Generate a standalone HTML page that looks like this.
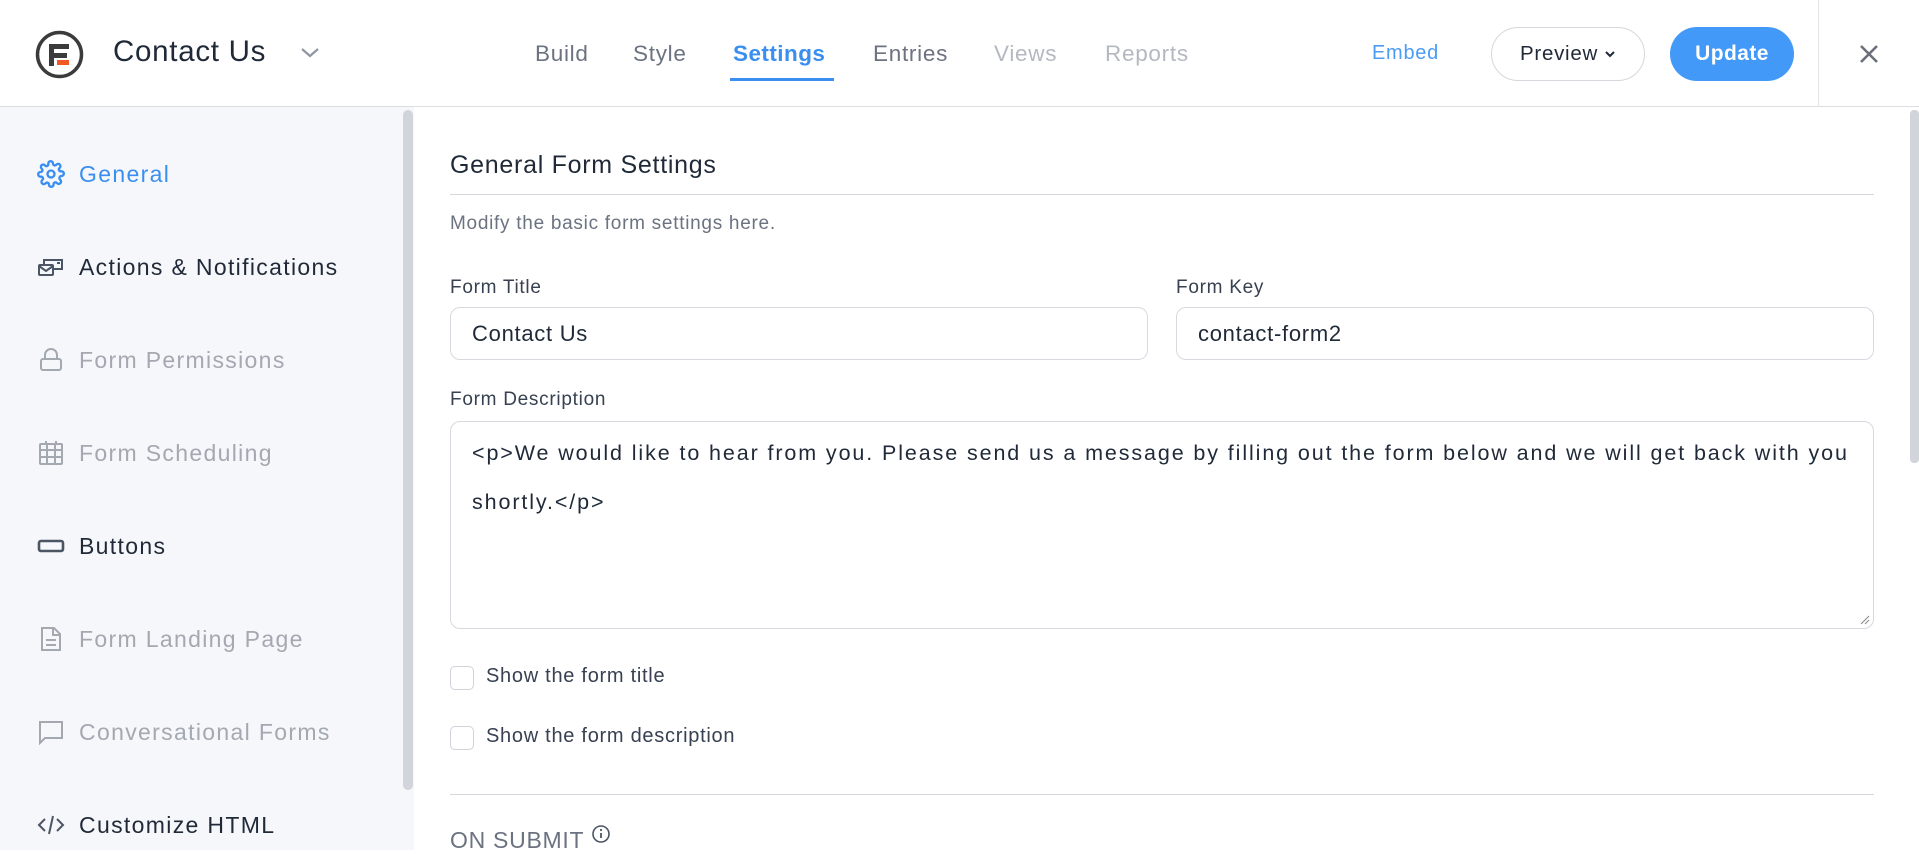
<!DOCTYPE html>
<html><head><meta charset="utf-8">
<style>
*{box-sizing:border-box;margin:0;padding:0}
body{width:1919px;height:850px;overflow:hidden;background:#fff;font-family:"Liberation Sans",sans-serif;color:#1f2937;position:relative;letter-spacing:0.045em}
.a{position:absolute;white-space:nowrap}
.hdr{position:absolute;left:0;top:0;width:1919px;height:107px;background:#fff;border-bottom:1px solid #dcdde1}
.nav{font-size:22.5px;color:#6b7280;top:41px}
.side{position:absolute;left:0;top:107px;width:414px;height:743px;background:#f6f7fb}
.si{position:absolute;left:37px;font-size:23px;display:flex;align-items:center;gap:14px;letter-spacing:0.058em}
.si svg{width:28px;height:28px}
.lbl{font-size:19px;color:#374151}
.inp{position:absolute;border:1px solid #d7d9de;border-radius:10px;background:#fff;font-size:22px;color:#1f2937;padding-left:21px;display:flex;align-items:center}
.cb{position:absolute;left:450px;width:24px;height:24px;border:1px solid #cfd2d8;border-radius:5px;background:#fff}
</style></head><body>
<div class="hdr"></div>
<svg class="a" style="left:35px;top:30px" width="49" height="49" viewBox="0 0 49 49"><circle cx="24.5" cy="24.5" r="22" fill="none" stroke="#3b3b3b" stroke-width="3.5"/><path d="M14 14h20v5H19v4h13v5H19v8h-5z" fill="#3b3b3b"/><rect x="22" y="30" width="12" height="5" fill="#f05a22"/></svg>
<div class="a" style="left:113px;top:35px;font-size:29.5px;color:#1f2937">Contact Us</div>
<svg class="a" style="left:300px;top:47px" width="20" height="12" viewBox="0 0 20 12"><path d="M2 2l8 7 8-7" fill="none" stroke="#9096a3" stroke-width="2.2"/></svg>
<div class="a nav" style="left:535px">Build</div>
<div class="a nav" style="left:633px">Style</div>
<div class="a nav" style="left:733px;color:#3a8ef0;font-weight:bold;letter-spacing:0.02em">Settings</div>
<div class="a" style="left:730px;top:78px;width:104px;height:3px;background:#3a8ef0"></div>
<div class="a nav" style="left:873px">Entries</div>
<div class="a nav" style="left:994px;color:#b4b8c0">Views</div>
<div class="a nav" style="left:1105px;color:#b4b8c0">Reports</div>
<div class="a" style="left:1372px;top:42px;font-size:20px;color:#4a9cf5">Embed</div>
<div class="a" style="left:1491px;top:27px;width:154px;height:54px;border:1px solid #d5d7dc;border-radius:27px;font-size:20.5px;color:#1f2937;display:flex;align-items:center;justify-content:center;gap:6px">Preview <svg width="12" height="8" viewBox="0 0 12 8"><path d="M2 2l4 4 4-4" fill="none" stroke="#1f2937" stroke-width="2"/></svg></div>
<div class="a" style="left:1670px;top:27px;width:124px;height:54px;border-radius:27px;background:#4299f7;color:#fff;font-size:21px;font-weight:bold;letter-spacing:0.02em;display:flex;align-items:center;justify-content:center">Update</div>
<div class="a" style="left:1818px;top:0;width:1px;height:107px;background:#e3e4e8"></div>
<svg class="a" style="left:1858px;top:43px" width="22" height="22" viewBox="0 0 22 22"><path d="M3 3l16 16M19 3L3 19" stroke="#6b6f7a" stroke-width="2.6"/></svg>

<div class="side"></div>
<div class="a" style="left:403px;top:110px;width:10px;height:680px;border-radius:5px;background:#d1d4db"></div>
<div class="si" style="top:160px;color:#3a8ef0"><svg viewBox="0 0 24 24" fill="none" stroke="#3a8ef0" stroke-width="2"><circle cx="12" cy="12" r="3"/><path d="M19.4 15a1.6 1.6 0 0 0 .3 1.8l.1.1a2 2 0 1 1-2.8 2.8l-.1-.1a1.6 1.6 0 0 0-2.7 1.1V21a2 2 0 1 1-4 0v-.1a1.6 1.6 0 0 0-2.7-1.1l-.1.1a2 2 0 1 1-2.8-2.8l.1-.1a1.6 1.6 0 0 0-1.1-2.7H3a2 2 0 1 1 0-4h.1a1.6 1.6 0 0 0 1.1-2.7l-.1-.1a2 2 0 1 1 2.8-2.8l.1.1a1.6 1.6 0 0 0 2.7-1.1V3a2 2 0 1 1 4 0v.1a1.6 1.6 0 0 0 2.7 1.1l.1-.1a2 2 0 1 1 2.8 2.8l-.1.1a1.6 1.6 0 0 0 1.1 2.7H21a2 2 0 1 1 0 4h-.1a1.6 1.6 0 0 0-1.5 1z"/></svg>General</div>
<div class="si" style="top:253px;color:#1f2937"><svg viewBox="0 0 28 28" fill="none" stroke="#4b5563" stroke-width="2"><rect x="2" y="12" width="14" height="10" rx="1"/><path d="M2 13l7 5 7-5M7 12V7h18v9h-9M20 10h3"/></svg>Actions &amp; Notifications</div>
<div class="si" style="top:346px;color:#a3a8b1"><svg viewBox="0 0 28 28" fill="none" stroke="#a3a8b1" stroke-width="2"><rect x="4" y="13" width="20" height="11" rx="2"/><path d="M8 13V9a6 6 0 0 1 12 0v4"/></svg>Form Permissions</div>
<div class="si" style="top:439px;color:#a3a8b1"><svg viewBox="0 0 28 28" fill="none" stroke="#a3a8b1" stroke-width="2"><rect x="3" y="5" width="22" height="20" rx="1"/><path d="M3 11h22M3 18h22M10 5v20M18 5v20M9 2v4M19 2v4"/></svg>Form Scheduling</div>
<div class="si" style="top:532px;color:#1f2937"><svg viewBox="0 0 28 28" fill="none" stroke="#4b5563" stroke-width="2.6"><rect x="2" y="9" width="24" height="10" rx="2"/></svg>Buttons</div>
<div class="si" style="top:625px;color:#a3a8b1"><svg viewBox="0 0 28 28" fill="none" stroke="#a3a8b1" stroke-width="2"><path d="M5 3h12l6 6v16H5z"/><path d="M16 3v7h7M9 15h10M9 20h10"/></svg>Form Landing Page</div>
<div class="si" style="top:718px;color:#a3a8b1"><svg viewBox="0 0 28 28" fill="none" stroke="#a3a8b1" stroke-width="2"><path d="M3 4h22v16H8l-5 5z"/></svg>Conversational Forms</div>
<div class="si" style="top:811px;color:#1f2937"><svg viewBox="0 0 28 28" fill="none" stroke="#4b5563" stroke-width="2"><path d="M8 8l-6 6 6 6M20 8l6 6-6 6M16 5l-4 18"/></svg>Customize HTML</div>

<div class="a" style="left:450px;top:151px;font-size:25px;color:#1f2937">General Form Settings</div>
<div class="a" style="left:450px;top:194px;width:1424px;height:1px;background:#d5d7dc"></div>
<div class="a" style="left:450px;top:213px;font-size:19px;color:#6b7280">Modify the basic form settings here.</div>
<div class="a lbl" style="left:450px;top:277px">Form Title</div>
<div class="a lbl" style="left:1176px;top:277px">Form Key</div>
<div class="inp" style="left:450px;top:307px;width:698px;height:53px">Contact Us</div>
<div class="inp" style="left:1176px;top:307px;width:698px;height:53px">contact-form2</div>
<div class="a lbl" style="left:450px;top:389px">Form Description</div>
<div class="inp" style="left:450px;top:421px;width:1424px;height:208px;white-space:nowrap;line-height:49px;padding-top:7px;font-size:21.5px;display:block;letter-spacing:0.088em">&lt;p&gt;We would like to hear from you. Please send us a message by filling out the form below and we will get back with you<br>shortly.&lt;/p&gt;</div>
<svg class="a" style="left:1860px;top:615px" width="10" height="10" viewBox="0 0 10 10"><path d="M9 1L1 9M9 5L5 9" stroke="#888" stroke-width="1"/></svg>
<div class="cb" style="top:666px"></div>
<div class="a" style="left:486px;top:665px;font-size:20px;color:#374151">Show the form title</div>
<div class="cb" style="top:726px"></div>
<div class="a" style="left:486px;top:725px;font-size:20px;color:#374151">Show the form description</div>
<div class="a" style="left:450px;top:794px;width:1424px;height:1px;background:#d5d7dc"></div>
<div class="a" style="left:450px;top:827px;font-size:23px;color:#6b7280">ON SUBMIT</div>
<svg class="a" style="left:591px;top:824px" width="20" height="20" viewBox="0 0 20 20"><circle cx="10" cy="10" r="8" fill="none" stroke="#4b5563" stroke-width="1.6"/><path d="M10 9v5" stroke="#4b5563" stroke-width="1.8"/><circle cx="10" cy="6" r="1.1" fill="#4b5563"/></svg>
<div class="a" style="left:1910px;top:110px;width:9px;height:353px;border-radius:4px;background:#d1d4db"></div>
</body></html>
